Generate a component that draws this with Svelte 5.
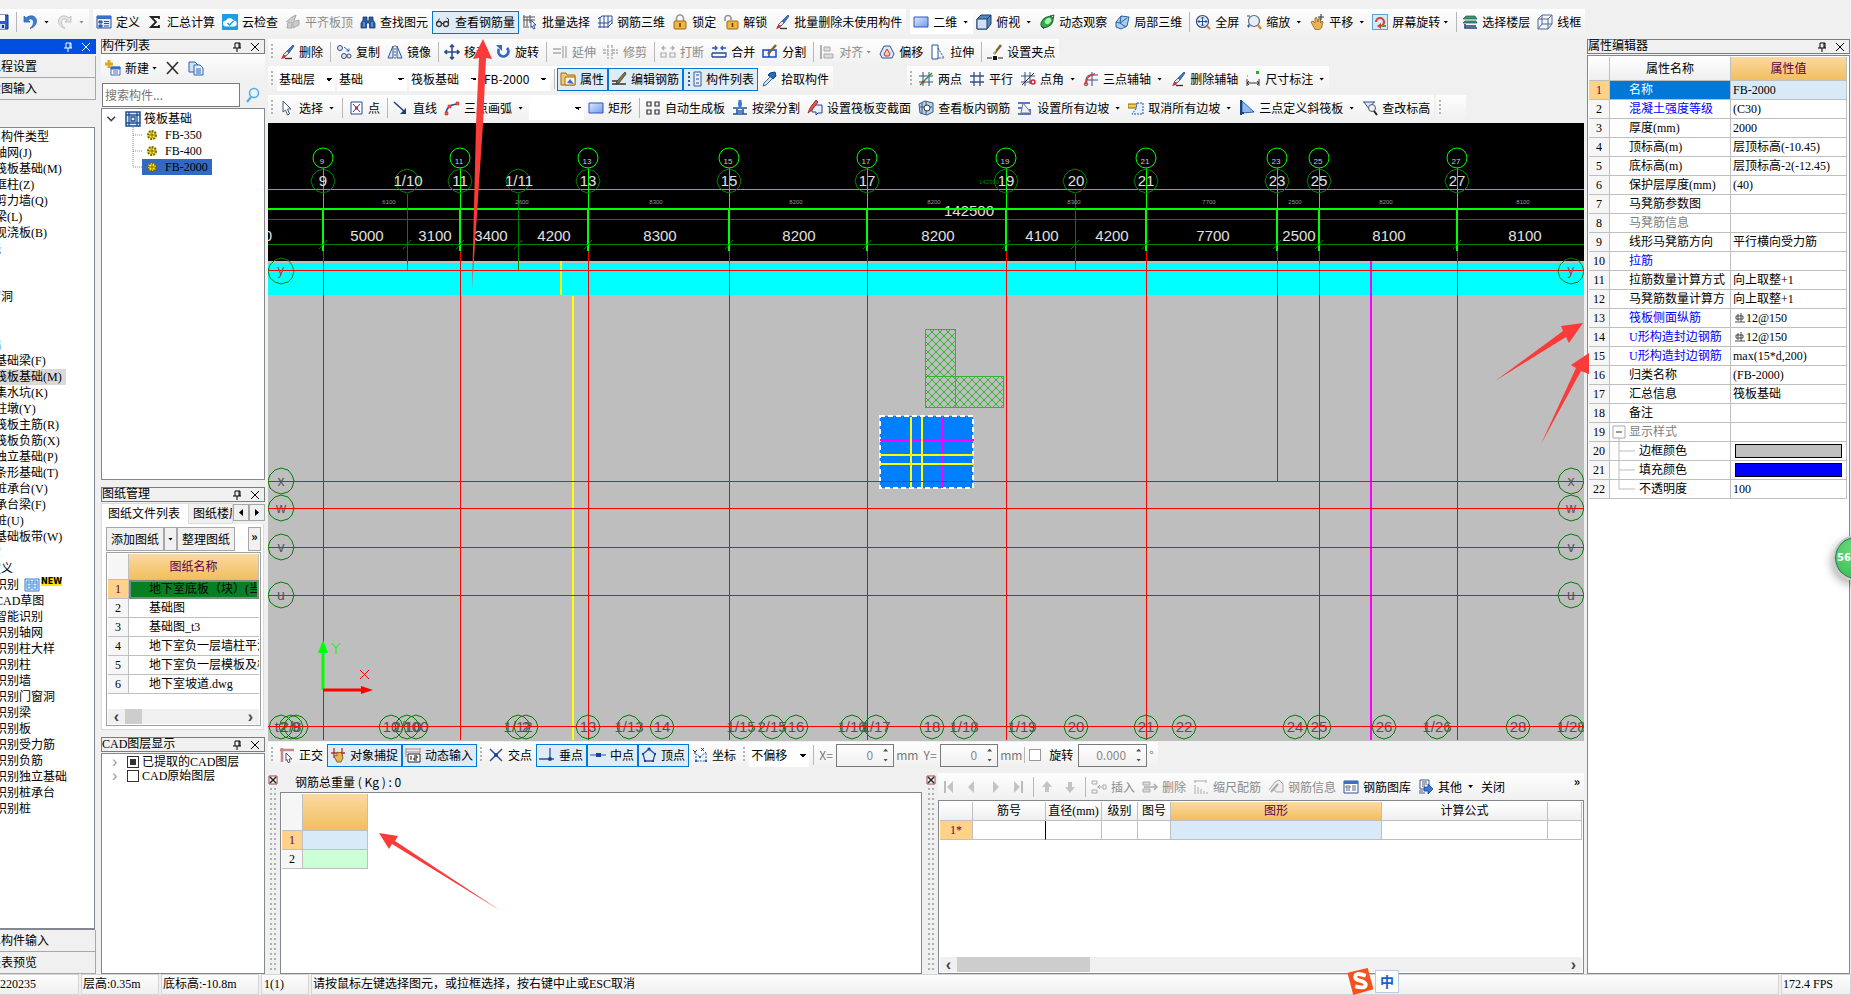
<script lang="ts">
	interface Tool {
		kind?: 'sep' | 'grip' | 'combo';
		icon?: string;
		label?: string;
		caret?: 'far' | 'near';
		on?: boolean;
		off?: boolean;
		white?: boolean;
		width?: number;
		name?: string;
	}

	const sep: Tool = { kind: 'sep' };
	const grip: Tool = { kind: 'grip' };

	// 16x16 glyphs
	const icons: Record<string, string> = {
		save: '<path d="M1 1h14v14H3l-2-2z" fill="#2f5fc4" stroke="#16357e"/><path d="M4 1h8v6H4z" fill="#fff"/><path d="M5 10h7v5H5z" fill="#c9d6ee"/><path d="M9 11h2v3H9z" fill="#16357e"/>',
		undo: '<path d="M2 2v6h6L5.8 6C9 3.500 12 5.500 11.500 9c-.3 2-1.500 4-3.500 5.500 4-1 6.500-4 6.500-7.500C14.500 2 8.500 0 4 4z" fill="#3d7fd6" stroke="#2355a0" stroke-width=".7"/>',
		redo: '<path d="M14 2v6H8l2.200-2C7 3.500 4 5.500 4.500 9c.3 2 1.500 4 3.500 5.500-4-1-6.500-4-6.500-7.500C1.500 2 7.500 0 12 4z" fill="#e6e6e6" stroke="#b8b8b8" stroke-width=".8"/>',
		define: '<path d="M1 2h14v12H1z" fill="#dce9fb" stroke="#2a5298"/><path d="M1 2h14v3H1z" fill="#3a6fc4"/><path d="M3 7h3v2H3zM3 11h3v2H3zM8 7.500h5M8 9.500h5M8 12h5" fill="#3a6fc4" stroke="#2a5298"/>',
		sigma: '<path d="M12 5V3H4l5 5-5 5h8v-2" fill="none" stroke="#222" stroke-width="1.800"/>',
		cloud: '<rect width="16" height="16" rx="1" fill="#1d9de3"/><path d="M4 12.500a3 3 0 0 1 0-6 4 4 0 0 1 7.500 0 3 3 0 0 1 .5 6z" fill="#fff"/><path d="M5.500 9l2 2 4-4" fill="none" stroke="#1d9de3" stroke-width="1.500"/>',
		top: '<path d="M1 8l6-5 4-2-2 6M3 8h4v6H2zM8 8l6-2v5l-6 3z" fill="#ccc" stroke="#aaa"/>',
		find: '<path d="M3 3h4v4h2V3h4v3l2 3v5H9.500V9h-3v5H1V9l2-3z" fill="#2a5ca8" stroke="#17396f" stroke-width=".8"/><path d="M4 8v5M12 8v5" stroke="#8fb6ea"/>',
		glasses: '<circle cx="4" cy="10" r="2.500" fill="none" stroke="#333" stroke-width="1.300"/><circle cx="11" cy="10" r="2.500" fill="none" stroke="#333" stroke-width="1.300"/><path d="M6.500 9.500h2M1.500 9.500l3-5M13.500 9.500V5l-2-1" fill="none" stroke="#333"/>',
		batch: '<path d="M2 1v11M5 3v9M8 1v8M1 3h12M1 6h12M1 13h6" stroke="#555" fill="none"/><path d="M9 6l5 5h-2.500l1.500 3.500-1.500.5-1.500-3-1 1.500z" fill="#fff" stroke="#2a5298"/>',
		rebar3d: '<path d="M1 5l4-3h10M1 9h10l4-3M1 13h10l4-4M3 3v11M7 2v12M11 2v12M15 2v8" fill="none" stroke="#2a5298"/>',
		lock: '<path d="M4.500 7V4.500a3.500 3.500 0 0 1 7 0V7" fill="none" stroke="#999" stroke-width="1.700"/><rect x="2" y="7" width="12" height="8" rx="1" fill="#efb646" stroke="#9b6a12"/><path d="M8 9v4" stroke="#5a3a00" stroke-width="1.500"/>',
		unlock: '<path d="M2 7V4.500a3 3 0 0 1 6 0V6" fill="none" stroke="#999" stroke-width="1.700"/><rect x="4" y="7" width="11" height="8" rx="1" fill="#efb646" stroke="#9b6a12"/><path d="M9.500 9v4" stroke="#5a3a00" stroke-width="1.500"/>',
		brush: '<path d="M14 1L8 7l2 2 5-7z" fill="#3f76c9" stroke="#1f3f7a" stroke-width=".7"/><path d="M8 7l2 2-3 3-3-1z" fill="#d9e4f3" stroke="#667"/><path d="M4 11l3 1-1 2-4 1z" fill="#c33"/><path d="M6 14.500h7" stroke="#333" stroke-width="1.300"/>',
		rect: '<defs><linearGradient id="bx" x2="1" y2="1"><stop stop-color="#dbe8ff"/><stop offset="1" stop-color="#6f9bee"/></linearGradient></defs><path d="M1 3h14v10H1z" fill="url(#bx)" stroke="#3555b5"/>',
		cube: '<path d="M1 5l4-4h10v9l-4 5H1z" fill="#5586bd" stroke="#1f3f6a"/><path d="M1 5h10v10H1z" fill="#cfe0f3" stroke="#1f3f6a"/><path d="M11 5l4-4" stroke="#1f3f6a"/>',
		orbit: '<ellipse cx="8" cy="8" rx="7" ry="4.500" transform="rotate(-40 8 8)" fill="#2fae4b" stroke="#16652a"/><ellipse cx="9" cy="7" rx="3.500" ry="2.500" transform="rotate(-40 9 7)" fill="#a9f0b3"/><path d="M2 12l3 3M11 2l4-1-1 4" stroke="#444" fill="none"/>',
		local3d: '<path d="M2 8l5-6 8 1-2 9-6 3-5-2z" fill="#a9cdee" stroke="#2a6298"/><path d="M7 2l-1 7 6 4M2 8l4 1M6 9l7-5" fill="none" stroke="#2a6298"/>',
		full: '<circle cx="7.500" cy="7.500" r="6" fill="#e6effb" stroke="#3a4a66" stroke-width="1.200"/><path d="M7.500 3v9M3 7.500h9M6 4.500L7.500 3 9 4.500M6 10.500L7.500 12 9 10.500M4.500 6L3 7.500 4.500 9M10.500 6L12 7.500 10.500 9" stroke="#234fa5" fill="none"/><path d="M12 12l3 3" stroke="#d08a22" stroke-width="2.200"/>',
		zoom: '<circle cx="8" cy="7" r="5.500" fill="#e2effb" stroke="#667" stroke-width="1.200"/><path d="M12 11l3 4" stroke="#d08a22" stroke-width="2.200"/><path d="M1 2h3M1 12h3M2.500 10.500v3" stroke="#234fa5"/>',
		pan: '<path d="M2 8l2-1 2 2V4l1.500-.5L9 8l1-4 1.500.5L11.500 9l1.500-2 1 1-1.500 6-2 1.500H6z" fill="#e8b452" stroke="#8a6420" stroke-width=".8"/><path d="M12 0v6M9 3h6" stroke="#333"/>',
		rotview: '<rect x=".5" y=".5" width="15" height="15" fill="#d6e9fb" stroke="#5da0da"/><path d="M4 8a4 4 0 1 1 4 4" fill="none" stroke="#d8432f" stroke-width="2.200"/><path d="M9 9v6l-4-3z" fill="#d8432f"/><path d="M10 12h4" stroke="#3da84a" stroke-width="2"/>',
		floor: '<path d="M1 5l3-3h9l2 3zM1 9l2-2h11l1 2z" fill="#3b9a5b" stroke="#1b4f6a" stroke-width=".7"/><path d="M3 10v4h12M4 12h10" fill="none" stroke="#1f3f7a" stroke-width="1.600"/>',
		wire: '<path d="M1 5l4-4h10v9l-4 5H1zM1 5h10v10M11 5l4-4M5 1v9h10M5 10l-4 5" fill="#eef4fc" fill-opacity=".5" stroke="#50698f"/>',
		copy: '<circle cx="4" cy="4" r="2.500" fill="#dfe8f6" stroke="#334a75"/><circle cx="8" cy="12" r="2.500" fill="#dfe8f6" stroke="#334a75"/><circle cx="13" cy="12" r="2" fill="none" stroke="#334a75"/><path d="M8 3l5 4M10.500 7H13V4.500" fill="none" stroke="#2f62c0"/>',
		mirror: '<path d="M6 2v12H1zM10 2v12h5z" fill="#dfe8f6" stroke="#2a5298"/><path d="M8 1v14" stroke="#555" stroke-dasharray="2 1"/>',
		move: '<path d="M8 1v14M1 8h14M6 3l2-2 2 2M6 13l2 2 2-2M3 6L1 8l2 2M13 6l2 2-2 2" fill="none" stroke="#2a4a8a" stroke-width="1.600"/>',
		rotate: '<path d="M4 5a5 5 0 1 0 8-1" fill="none" stroke="#3566c0" stroke-width="2.800"/><path d="M1 1h6v6z" fill="#3566c0"/>',
		extend: '<path d="M1 5h8M1 9h8M11 2v12M14 2v12" stroke="#aaa" fill="none" stroke-width="1.300"/>',
		trim: '<path d="M5 1v14M9 1v14M0 6h5M0 9h5M9 6h6M9 9h6" stroke="#aaa" stroke-width="1.300" fill="none" stroke-dasharray="3 1"/>',
		cut: '<path d="M1 9h5v4H1zM10 9h5v4h-5zM2 4h4M10 4h4M4 2L2 4l2 2M12 2l2 2-2 2" fill="none" stroke="#aaa" stroke-width="1.200"/>',
		join: '<path d="M1 13h14M1 9h14v4M1 9v4" fill="none" stroke="#2a4a8a" stroke-width="1.300"/><path d="M1 4h5M10 4h5M4 2l2 2-2 2M12 2l-2 2 2 2" fill="none" stroke="#2a5bc4" stroke-width="1.400"/>',
		split: '<path d="M1 6h13v7H1zM7 6v7" fill="none" stroke="#1446e0" stroke-width="1.500"/><path d="M14 1L6 10" stroke="#7c6334" stroke-width="2.400"/>',
		align: '<path d="M2 1v14" stroke="#999" stroke-width="1.500"/><path d="M5 3h6v4H5zM5 10h9v4H5z" fill="#ddd" stroke="#aaa"/>',
		offset: '<path d="M5 2h6l4 8-2 4H3l-2-4z" fill="#dce7f8" stroke="#2a5298"/><path d="M8 5l3 5-1 2H6l-1-2z" fill="#f4c7c7" stroke="#c0392b"/>',
		stretch: '<path d="M2 1h6v14H2z" fill="#fff" stroke="#2a5298"/><path d="M8 4l6 10H8" fill="none" stroke="#2a5298" stroke-dasharray="2 1"/>',
		gripset: '<path d="M0 14h5M11 14h5" stroke="#222"/><path d="M6 12h4v4H6z" fill="#111"/><path d="M14 1L7 10" stroke="#7c6334" stroke-width="2.400"/><path d="M7 10l2-4" stroke="#e8d59a"/>',
		props: '<path d="M1 4V2h5l1 2h8v10H1z" fill="#f4c879" stroke="#a56a13"/><path d="M5 6h10v8H5z" fill="#fff7e2" stroke="#a56a13"/><path d="M7 12l3-4 4 5z" fill="#3a6fc4"/>',
		edit: '<path d="M1 13h14M1 10h6" stroke="#333" stroke-width="1.300"/><path d="M14 1L6 10l-1 3 3-1 7-9z" fill="#8a7a4a" stroke="#333" stroke-width=".8"/>',
		list: '<path d="M2 2h3M2 6h3M2 10h3M2 14h3" stroke="#3a5c9c" stroke-width="2" stroke-dasharray="2 1"/><path d="M8 1h7v14H8z" fill="#e4edfa" stroke="#3a5c9c"/><path d="M10 4h3M10 8h3M10 12h3" stroke="#2a5298"/>',
		pick: '<path d="M9 2l5-1 1 4-3 3-5-4z" fill="#1f6fc4" stroke="#123c70"/><path d="M9 6l-6 6-1 3 3-1 6-6" fill="#cfe4fa" stroke="#3a6a9c"/>',
		twopt: '<path d="M1 5h14M1 11h14M5 1v14M11 1v14" stroke="#33508c"/><path d="M2 14L14 2" stroke="#2d9a36" stroke-width="1.500"/><circle cx="5" cy="11" r="1.500" fill="#c33"/>',
		parallel: '<path d="M1 5h14M1 11h14M5 1v14M11 1v14" stroke="#33508c" stroke-width="1.300"/>',
		angle: '<path d="M1 5h14M1 11h10M5 1v14M10 1v12" stroke="#33508c"/><path d="M2 14L14 2" stroke="#333"/><circle cx="13" cy="11" r="2" fill="none" stroke="#d22" stroke-width="1.500"/>',
		threept: '<path d="M3 14V9q0-5 5-5h7M9 1v14M3 9h12" fill="none" stroke="#33508c"/><path d="M3 13q0-9 9-10" fill="none" stroke="#d33" stroke-width="1.400"/><circle cx="3" cy="13" r="1.800" fill="none" stroke="#d33"/>',
		dim: '<path d="M2 8v7M14 8v7M2 12h12M4 10l-2 2 2 2M12 10l2 2-2 2" fill="none" stroke="#333"/><path d="M11 0h3v3h-3z" fill="#29a53a"/><path d="M2 5h1" stroke="#29a53a"/>',
		cursor: '<path d="M4 1l8 8H8.500l2 5-2 1-2-5L4 12z" fill="#fff" stroke="#46587c"/>',
		point: '<path d="M3 2h11v12H3z" fill="#fff" stroke="#2a4a8a"/><path d="M5 4l7 8M12 4l-7 8" stroke="#2a3fa0"/><path d="M7 6.500h3v3H7z" fill="#d22"/>',
		line: '<path d="M1 2l11 10" stroke="#1f3f7a" stroke-width="1.500"/><path d="M13 8v6H7z" fill="#1f3f7a"/>',
		arc: '<path d="M2 14q0-9 11-10" fill="none" stroke="#2a5298" stroke-width="1.500"/><path d="M1 12h3v3H1zM4 5h3v3H4zM12 2h3v3h-3z" fill="#e55" stroke="#a22" stroke-width=".5"/>',
		auto: '<path d="M2 2h4v4H2zM10 2h4v4h-4zM2 10h4v4H2zM10 10h4v4h-4z" fill="#eef" stroke="#333" stroke-width="1.200"/>',
		beam: '<path d="M1 8h14M1 14h14M5 9v5M11 9v5" stroke="#2a5298" stroke-width="1.600"/><path d="M8 0v7M6 4h4" stroke="#3a78d4" stroke-width="3"/><path d="M6 10h4v4H6z" fill="#4f8ae0"/>',
		section: '<path d="M5 5h10v8h-4l-2 2v-3H5z" fill="#e8eefa" stroke="#2a3fa0"/><path d="M9 0L3 8l-2 5 4-3 6-8z" fill="#e2574a" stroke="#8a1f16" stroke-width=".8"/>',
		inboard: '<path d="M1 4l6-3 8 2v9l-6 3-7-2z" fill="#b8d3ef" stroke="#31587f"/><path d="M4 3v10M8 2v12M2 7h12" stroke="#31587f"/><circle cx="9" cy="8" r="3" fill="#fff" stroke="#333"/>',
		slope: '<path d="M1 3h12M1 8h5M1 14h12V9" fill="none" stroke="#1f4fc0" stroke-width="1.500"/><path d="M6 3l8 10H4z" fill="#e8f0fc" stroke="#777"/>',
		noslope: '<path d="M0 4h9v4H0z" fill="#f0cf4a" stroke="#8a6a12"/><path d="M9 3h6v11H4l4-5z" fill="#e8f0fc" stroke="#1f4fc0" stroke-dasharray="2 1"/>',
		slant: '<path d="M3 1v12l12-1z" fill="#8dbbf0" stroke="#2a62b0"/><path d="M2 0v15M1 13h4" stroke="#1f3f7a" stroke-width="2"/>',
		elev: '<path d="M1 2h12M2 2l5 7 5-7" fill="#dce7f8" stroke="#2a5298"/><circle cx="10" cy="8" r="3.500" fill="#eaf3fd" stroke="#555"/><path d="M12 11l3 4" stroke="#222" stroke-width="2"/>',
		ortho: '<path d="M1 3h14M3 1v14" stroke="#c48a8a" stroke-width="2.500"/><path d="M7 6l6 6h-3l1 3-2 .5-1-3-1 1z" fill="#fff" stroke="#46587c"/>',
		snap: '<path d="M1 6h14M4 1v10M12 1v8" stroke="#a33" stroke-width="1.300"/><path d="M4 9l2-1 1 1V5l2 1 1-1 2 2 1 4-2 4H7z" fill="#e8b452" stroke="#8a6420"/>',
		dyn: '<path d="M1 2h14M1 5h14M1 1v9M15 1v5" stroke="#a88" fill="none"/><path d="M3 7h12v8H3z" fill="#fff" stroke="#222"/><path d="M6 9v4M9 9h3v2H9v2h3" fill="none" stroke="#111"/>',
		cross: '<path d="M2 2l12 12M14 2L2 14" stroke="#2a5298" stroke-width="1.500"/><circle cx="8" cy="8" r="2" fill="#1f3f9a"/>',
		perp: '<path d="M0 12h15M11 1v11" stroke="#2a5298" stroke-width="1.300"/><circle cx="11" cy="12" r="2" fill="#1f3f9a"/>',
		mid: '<path d="M0 8h16" stroke="#2a5298"/><path d="M6 6h5v4H6z" fill="#1f3f9a"/>',
		vertex: '<path d="M8 2l6 5-2 7H4L2 7z" fill="none" stroke="#2a5298" stroke-width="1.300"/><circle cx="8" cy="2" r="1.600" fill="#1f3f9a"/><path d="M1 6h2v2H1zM13 6h2v2h-2zM3 13h2v2H3zM11 13h2v2h-2z" fill="#1f3f9a"/>',
		coord: '<path d="M4 14V7l4 3 6-5v9z" fill="none" stroke="#2a62c0" stroke-dasharray="2 1"/><path d="M1 3l2 2 2-2M3 5v2M9 1l3 3M12 1L9 4" fill="none" stroke="#333"/><path d="M3 13h2v2H3zM13 13h2v2h-2zM7 9h2v2H7z" fill="#2a62c0"/>',
		first: '<path d="M4 2v12" stroke="#bbb" stroke-width="2"/><path d="M12 2v12L6 8z" fill="#c4c4c4"/>',
		prev: '<path d="M10 2v12L4 8z" fill="#c4c4c4"/>',
		next: '<path d="M6 2v12l6-6z" fill="#c4c4c4"/>',
		last: '<path d="M12 2v12" stroke="#bbb" stroke-width="2"/><path d="M4 2v12l6-6z" fill="#c4c4c4"/>',
		up: '<path d="M8 2l5 6h-3v5H6V8H3z" fill="#c4c4c4"/>',
		down: '<path d="M8 14l5-6h-3V3H6v5H3z" fill="#c4c4c4"/>',
		insert: '<path d="M1 2h5v3H1zM1 11h5v3H1zM6 8h5M9 6L7 8l2 2M12 6h3v4h-3z" fill="none" stroke="#aaa"/>',
		remove: '<path d="M1 3h7v3H1zM1 10h7v3H1z" fill="#ddd" stroke="#aaa"/><path d="M2 8h13M12 5l3 3-3 3" fill="none" stroke="#aaa" stroke-width="1.300"/>',
		scale: '<path d="M2 1v3M13 1v3M2 2h11M2 6v9M5 8v7M8 10v5M11 12v3M14 13v2" stroke="#aaa"/>',
		info: '<path d="M1 11L7 3l4-2 4 4v8H8l-2-3" fill="#eee" stroke="#aaa"/><path d="M3 13l7-8" stroke="#aaa" stroke-width="2"/>',
		lib: '<path d="M1 2h14v12H1z" fill="#fff" stroke="#2a5298"/><path d="M1 2h14v3H1z" fill="#3a6fc4"/><path d="M3 7h4v2H3zM9 7h4M3 11h4M9 11h4M9 9h4" stroke="#667" fill="none"/>',
		other: '<path d="M2 1h9v9H2z" fill="#fff" stroke="#46587c"/><path d="M4 3h5M4 5h5M4 7h3M1 12h4M1 14h6" stroke="#46587c"/><path d="M6 8h4V5l5 5-5 5v-3H6z" fill="#3a78e0" stroke="#1f3f9a" stroke-width=".8"/>'
	};

	const quickTools: Tool[] = [
		{ icon: 'save', name: '保存' }, sep,
		{ icon: 'undo', name: '撤销', caret: 'far' },
		{ icon: 'redo', name: '恢复', caret: 'far', off: true }
	];

	const mainTools: Tool[] = [
		{ icon: 'define', label: '定义' },
		{ icon: 'sigma', label: '汇总计算' },
		{ icon: 'cloud', label: '云检查' },
		{ icon: 'top', label: '平齐板顶', off: true },
		{ icon: 'find', label: '查找图元' },
		{ icon: 'glasses', label: '查看钢筋量', on: true },
		{ icon: 'batch', label: '批量选择' },
		{ icon: 'rebar3d', label: '钢筋三维' },
		{ icon: 'lock', label: '锁定' },
		{ icon: 'unlock', label: '解锁' },
		{ icon: 'brush', label: '批量删除未使用构件' }
	];

	const viewTools: Tool[] = [
		{ icon: 'rect', label: '二维', caret: 'far', white: true },
		{ icon: 'cube', label: '俯视', caret: 'far' },
		{ icon: 'orbit', label: '动态观察' },
		{ icon: 'local3d', label: '局部三维' }, sep,
		{ icon: 'full', label: '全屏' },
		{ icon: 'zoom', label: '缩放', caret: 'far' },
		{ icon: 'pan', label: '平移', caret: 'far' },
		{ icon: 'rotview', label: '屏幕旋转', caret: 'near' }, sep,
		{ icon: 'floor', label: '选择楼层' },
		{ icon: 'wire', label: '线框' }
	];

	const editTools: Tool[] = [
		grip,
		{ icon: 'brush', label: '删除' }, sep,
		{ icon: 'copy', label: '复制' },
		{ icon: 'mirror', label: '镜像' }, sep,
		{ icon: 'move', label: '移动' },
		{ icon: 'rotate', label: '旋转' }, sep,
		{ icon: 'extend', label: '延伸', off: true },
		{ icon: 'trim', label: '修剪', off: true }, sep,
		{ icon: 'cut', label: '打断', off: true },
		{ icon: 'join', label: '合并' },
		{ icon: 'split', label: '分割' }, sep,
		{ icon: 'align', label: '对齐', off: true, caret: 'near' },
		{ icon: 'offset', label: '偏移' },
		{ icon: 'stretch', label: '拉伸' }, sep,
		{ icon: 'gripset', label: '设置夹点' }
	];

	const memberTools: Tool[] = [
		grip,
		{ kind: 'combo', label: '基础层', width: 58, name: '楼层' },
		{ kind: 'combo', label: '基础', width: 70, name: '构件大类' },
		{ kind: 'combo', label: '筏板基础', width: 71, name: '构件小类' },
		{ kind: 'combo', label: 'FB-2000', width: 68, name: '构件' }, sep,
		{ icon: 'props', label: '属性', on: true },
		{ icon: 'edit', label: '编辑钢筋', on: true },
		{ icon: 'list', label: '构件列表', on: true },
		{ icon: 'pick', label: '拾取构件' }
	];

	const axisTools: Tool[] = [
		grip,
		{ icon: 'twopt', label: '两点' },
		{ icon: 'parallel', label: '平行' },
		{ icon: 'angle', label: '点角', caret: 'far' },
		{ icon: 'threept', label: '三点辅轴', caret: 'far' },
		{ icon: 'brush', label: '删除辅轴' },
		{ icon: 'dim', label: '尺寸标注', caret: 'far' }
	];

	const drawTools: Tool[] = [
		grip,
		{ icon: 'cursor', label: '选择', caret: 'far' }, sep,
		{ icon: 'point', label: '点' }, sep,
		{ icon: 'line', label: '直线' },
		{ icon: 'arc', label: '三点画弧', caret: 'far' },
		{ kind: 'combo', label: '', width: 55, name: '画弧方式' },
		{ icon: 'rect', label: '矩形' }, sep,
		{ icon: 'auto', label: '自动生成板' },
		{ icon: 'beam', label: '按梁分割' },
		{ icon: 'section', label: '设置筏板变截面' },
		{ icon: 'inboard', label: '查看板内钢筋' },
		{ icon: 'slope', label: '设置所有边坡', caret: 'far' },
		{ icon: 'noslope', label: '取消所有边坡', caret: 'far' },
		{ icon: 'slant', label: '三点定义斜筏板', caret: 'far' },
		{ icon: 'elev', label: '查改标高' }
	];

	const snapTools: Tool[] = [
		grip,
		{ icon: 'ortho', label: '正交' },
		{ icon: 'snap', label: '对象捕捉', on: true },
		{ icon: 'dyn', label: '动态输入', on: true }, grip,
		{ icon: 'cross', label: '交点' },
		{ icon: 'perp', label: '垂点', on: true },
		{ icon: 'mid', label: '中点', on: true },
		{ icon: 'vertex', label: '顶点', on: true },
		{ icon: 'coord', label: '坐标' }, grip,
		{ kind: 'combo', label: '不偏移', width: 60, name: '偏移方式' }, sep
	];

	const rebarNav: Tool[] = [
		{ icon: 'first', name: '首行', off: true },
		{ icon: 'prev', name: '上一行', off: true },
		{ icon: 'next', name: '下一行', off: true },
		{ icon: 'last', name: '末行', off: true }, sep,
		{ icon: 'up', name: '上移', off: true },
		{ icon: 'down', name: '下移', off: true }, sep
	];

	const rebarTools: Tool[] = [
		{ icon: 'insert', label: '插入', off: true },
		{ icon: 'remove', label: '删除', off: true },
		{ icon: 'scale', label: '缩尺配筋', off: true },
		{ icon: 'info', label: '钢筋信息', off: true },
		{ icon: 'lib', label: '钢筋图库' },
		{ icon: 'other', label: '其他', caret: 'far' },
		{ label: '关闭' }
	];

	const navGroups = [
		{ name: '常用构件类型', items: ['轴网(J)', '筏板基础(M)', '框柱(Z)', '剪力墙(Q)', '梁(L)', '现浇板(B)'] },
		{ name: '轴线', items: [] },
		{ name: '柱', items: [] },
		{ name: '墙', items: [] },
		{ name: '门窗洞', items: [] },
		{ name: '梁', items: [] },
		{ name: '板', items: [] },
		{
			name: '基础',
			items: ['基础梁(F)', '筏板基础(M)', '集水坑(K)', '柱墩(Y)', '筏板主筋(R)', '筏板负筋(X)', '独立基础(P)', '条形基础(T)', '桩承台(V)', '承台梁(F)', '桩(U)', '基础板带(W)']
		},
		{ name: '其它', items: [] },
		{ name: '自定义', items: [] },
		{
			name: '识别',
			prefix: 'CAD',
			items: ['CAD草图', '智能识别', '识别轴网', '识别柱大样', '识别柱', '识别墙', '识别门窗洞', '识别梁', '识别板', '识别受力筋', '识别负筋', '识别独立基础', '识别桩承台', '识别桩']
		}
	];

	const drawings = ['地下室底板（块）(当前)', '基础图', '基础图_t3', '地下室负一层墙柱平法', '地下室负一层模板及板', '地下室坡道.dwg'];

	interface Prop {
		name: string;
		value?: string;
		tone?: string;
		bar?: boolean;
		swatch?: string;
		tree?: 'root' | 'mid' | 'end';
	}

	const props: Prop[] = [
		{ name: '名称', value: 'FB-2000', tone: 'picked' },
		{ name: '混凝土强度等级', value: '(C30)', tone: 'key' },
		{ name: '厚度(mm)', value: '2000' },
		{ name: '顶标高(m)', value: '层顶标高(-10.45)' },
		{ name: '底标高(m)', value: '层顶标高-2(-12.45)' },
		{ name: '保护层厚度(mm)', value: '(40)' },
		{ name: '马凳筋参数图' },
		{ name: '马凳筋信息', tone: 'dim' },
		{ name: '线形马凳筋方向', value: '平行横向受力筋' },
		{ name: '拉筋', tone: 'key' },
		{ name: '拉筋数量计算方式', value: '向上取整+1' },
		{ name: '马凳筋数量计算方', value: '向上取整+1' },
		{ name: '筏板侧面纵筋', value: '12@150', tone: 'key', bar: true },
		{ name: 'U形构造封边钢筋', value: '12@150', tone: 'key', bar: true },
		{ name: 'U形构造封边钢筋', value: 'max(15*d,200)', tone: 'key' },
		{ name: '归类名称', value: '(FB-2000)' },
		{ name: '汇总信息', value: '筏板基础' },
		{ name: '备注' },
		{ name: '显示样式', tone: 'dim', tree: 'root' },
		{ name: '边框颜色', swatch: '#c0c0c0', tree: 'mid' },
		{ name: '填充颜色', swatch: '#0000ff', tree: 'mid' },
		{ name: '不透明度', value: '100', tree: 'end' }
	];

	// drawing area, in window coordinates
	const axes = [
		{ x: 323, n: '9' }, { x: 460, n: '11' }, { x: 588, n: '13' }, { x: 729, n: '15' }, { x: 867, n: '17' },
		{ x: 1006, n: '19' }, { x: 1146, n: '21' }, { x: 1277, n: '23', end: 481 }, { x: 1319, n: '25' }, { x: 1457, n: '27' }
	];
	const subAxes = [{ x: 407, n: '1/10' }, { x: 518, n: '1/11' }, { x: 1075, n: '20' }];
	const rowsY = [
		{ y: 481, n: 'x' }, { y: 508, n: 'w' }, { y: 547, n: 'v' }, { y: 595, n: 'u' }
	];
	const spans: [number, string][] = [
		[268, '0'], [367, '5000'], [435, '3100'], [491, '3400'], [554, '4200'], [660, '8300'], [799, '8200'], [938, '8200'],
		[1042, '4100'], [1112, '4200'], [1213, '7700'], [1299, '2500'], [1389, '8100'], [1525, '8100']
	];
	const tinySpans: [number, string][] = [
		[389, '6100'], [522, '2600'], [656, '8300'], [796, '8200'], [934, '8200'], [1074, '8300'], [1209, '7700'],
		[1295, '2500'], [1386, '8200'], [1523, '8100']
	];
	const feet: [number, string][] = [
		[281, 't2'], [291, '2/8'], [296, '9'], [391, '10'], [407, '2/10'], [416, '100'], [518, '1/12'], [526, '2'], [588, '13'],
		[629, '1/13'], [662, '14'], [741, '1/15'], [772, '2/15'], [796, '16'], [852, '1/16'], [876, '1/17'], [932, '18'],
		[964, '1/18'], [1022, '1/19'], [1076, '20'], [1146, '21'], [1184, '22'], [1295, '24'], [1319, '25'], [1384, '26'],
		[1437, '1/26'], [1518, '28'], [1571, '1/28']
	];

	// plotted circles are twelve-sided
	function ring(cx: number, cy: number, r: number): string {
		return Array.from({ length: 12 }, (_, i) => {
			const a = (i * Math.PI) / 6;
			return `${Math.round(cx + r * Math.cos(a))},${Math.round(cy + r * Math.sin(a))}`;
		}).join(' ');
	}

	let search = $state('');
	let offsetX = $state('0');
	let offsetY = $state('0');
	let angle = $state('0.000');
</script>

{#snippet glyph(name: string)}
	<svg class="icon" viewBox="0 0 16 16" aria-hidden="true">{@html icons[name]}</svg>
{/snippet}

{#snippet tools(list: Tool[])}
	{#each list as tool}
		{#if tool.kind === 'sep'}
			<span class="sep"></span>
		{:else if tool.kind === 'grip'}
			<span class="grip"></span>
		{:else if tool.kind === 'combo'}
			<select class="combo" aria-label={tool.name} style={`width:${tool.width}px`}>
				<option>{tool.label}</option>
			</select>
		{:else}
			<button class="tool" class:on={tool.on} class:off={tool.off} class:white={tool.white} aria-label={tool.label ?? tool.name}>
				{#if tool.icon}{@render glyph(tool.icon)}{/if}
				{#if tool.label}<span>{tool.label}</span>{/if}
				{#if tool.caret}<i class={`caret ${tool.caret}`}></i>{/if}
			</button>
		{/if}
	{/each}
{/snippet}

{#snippet title(text: string, active = false)}
	<header class="title" class:active>
		<h2>{text}</h2>
		<button aria-label="自动隐藏"><svg viewBox="0 0 10 10"><path d="M3 1h5v5M3 1v5M7 1v5M1 6h8M5 6v4" /></svg></button>
		<button aria-label="关闭面板"><svg viewBox="0 0 10 10"><path d="M1 1l8 8M9 1L1 9" /></svg></button>
	</header>
{/snippet}

{#snippet arrows()}
	<span class="arrows"><i class="tri up"></i><i class="tri"></i></span>
{/snippet}

{#snippet handle(name: string)}
	<div class="handle">
		<button aria-label={name}><svg viewBox="0 0 10 10"><path d="M1 1h8v8H1z" fill="#fff" stroke="#944" /><path d="M2 2l6 6M8 2L2 8" stroke="#222" stroke-width="1.500" /></svg></button>
		<i></i>
	</div>
{/snippet}

<div class="app">
	<div class="topbar">
		<div class="group quick">{@render tools(quickTools)}</div>
		<div class="group">{@render tools(mainTools)}</div>
		<div class="group">{@render tools(viewTools)}</div>
	</div>

	<div class="main">
		<aside class="nav">
			{@render title('', true)}
			<button class="page first">工程设置</button>
			<button class="page">绘图输入</button>
			<div class="nav-gap"></div>
			<div class="nav-tree">
				<ul>
					{#each navGroups as group}
						<li>
							{#if group.prefix}<small>{group.prefix}</small>{/if}{group.name}
							{#if group.prefix}
								<svg class="book" viewBox="0 0 16 14"><path d="M1 1h14v12H1z" fill="#e4f1fd" stroke="#3b7ac0" /><path d="M3 3h4v8H3zM9 3h4v8H9zM3 5h4M3 8h4M9 5h4M9 8h4" fill="none" stroke="#3b8ad8" /></svg>
								<b class="new">NEW</b>
							{/if}
						</li>
						{#each group.items as item, i}
							<li class="leaf"><span class:current={group.name === '基础' && i === 1}>{item}</span></li>
						{/each}
					{/each}
				</ul>
			</div>
			<button class="page">单构件输入</button>
			<button class="page">报表预览</button>
		</aside>

		<aside class="side">
			{@render title('构件列表')}
			<div class="side-tools">
				<button class="tool"><svg class="icon" viewBox="0 0 16 16"><path d="M4 0v8M0 4h8" stroke="#e0a91c" stroke-width="3" /><path d="M6 7h9v8H6z" fill="#fff" stroke="#3a6fc4" /><path d="M6 7h9v2H6zM8 11h5M8 13h5" fill="#3a6fc4" stroke="#3a6fc4" /></svg><span>新建</span><i class="caret near"></i></button>
				<button class="tool" aria-label="删除构件"><svg class="icon" viewBox="0 0 16 16"><path d="M2 2l11 12M13 2L2 14" stroke="#333" stroke-width="1.700" /></svg></button>
				<button class="tool" aria-label="复制构件"><svg class="icon" viewBox="0 0 16 16"><path d="M1 2h6l3 3v7H1z" fill="#cfe2f8" stroke="#2a62b0" /><path d="M6 5h6l3 3v7H6z" fill="#e8f2fd" stroke="#2a62b0" /><path d="M8 9h5M8 11h5M8 13h5" stroke="#2a62b0" /></svg></button>
			</div>
			<div class="search">
				<input type="text" placeholder="搜索构件..." aria-label="搜索构件" bind:value={search} />
				<button aria-label="搜索"><svg class="icon" viewBox="0 0 16 16"><circle cx="9" cy="6" r="4.500" fill="#e8f5ff" stroke="#5aace4" stroke-width="1.600" /><path d="M6 10l-4 5" stroke="#5aace4" stroke-width="2.200" /></svg></button>
			</div>
			<div class="box members">
				<div class="branch">
					<svg class="fold" viewBox="0 0 26 16"><path d="M7 5l5 5 5-5" fill="none" stroke="#444" stroke-width="2" /></svg>
					<svg class="icon" viewBox="0 0 16 16"><path d="M1 1h14v14H1z" fill="#dce9f8" stroke="#1f4f90" stroke-width="1.500" /><path d="M4 1v14M12 1v14M1 4h14M1 12h14M6 6h4v4H6z" fill="none" stroke="#1f4f90" stroke-width="1.300" /></svg>
					<span>筏板基础</span>
				</div>
				{#each ['FB-350', 'FB-400', 'FB-2000'] as member}
					<div class="member">
						<svg class="twig" viewBox="0 0 10 16"><path d={member === 'FB-2000' ? 'M1 0v8h9' : 'M1 0v16M1 8h9'} fill="none" stroke="#888" stroke-dasharray="1 1" /></svg>
						<span class="leafname" class:current={member === 'FB-2000'}>
							<svg viewBox="0 0 12 12"><circle cx="6" cy="6" r="4" fill="#ffe92e" stroke="#7a6a00" stroke-dasharray="2 1" stroke-width="2" /><path d="M6 3v6M3 6h6" stroke="#7a6a00" /></svg>
							{member}
						</span>
					</div>
				{/each}
			</div>

			<div class="gap"></div>
			{@render title('图纸管理')}
			<div class="sheets">
				<div class="tabs">
					<button class="tab active">图纸文件列表</button>
					<button class="tab">图纸楼层对照表</button>
					<button class="step" aria-label="左移"><i class="tri left"></i></button>
					<button class="step" aria-label="右移"><i class="tri right"></i></button>
				</div>
				<div class="sheet-body">
					<div class="sheet-tools">
						<button class="raised">添加图纸</button>
						<button class="raised drop" aria-label="更多添加方式"><i class="caret"></i></button>
						<button class="raised">整理图纸</button>
						<button class="raised more">»</button>
					</div>
					<div class="sheet-grid">
						<table class="grid">
							<thead><tr><th class="idx"></th><th class="hot">图纸名称</th></tr></thead>
							<tbody>
								{#each drawings as drawing, i}
									<tr class:current={i === 0}><td class="idx">{i + 1}</td><td>{drawing}</td></tr>
								{/each}
							</tbody>
						</table>
						<div class="scroll"><i>‹</i><span class="thumb short"></span><i>›</i></div>
					</div>
				</div>
			</div>

			<div class="gap"></div>
			{@render title('CAD图层显示')}
			<div class="box layers">
				<div class="layer"><i>›</i><label><input type="checkbox" indeterminate={true} />已提取的CAD图层</label></div>
				<div class="layer"><i>›</i><label><input type="checkbox" />CAD原始图层</label></div>
			</div>
		</aside>

		<main class="work">
			<div class="bar edit"><div class="group">{@render tools(editTools)}</div></div>
			<div class="bar member-bar">
				<div class="group">{@render tools(memberTools)}</div>
				<div class="group axis">{@render tools(axisTools)}</div>
			</div>
			<div class="bar draw">
				<div class="group">{@render tools(drawTools)}</div>
				<div class="group spare"><span class="grip"></span></div>
			</div>

			<div class="canvas">
				<svg width="100%" height="100%">
					<defs>
						<pattern id="hatch" width="8" height="8" patternUnits="userSpaceOnUse">
							<path d="M0 0l8 8M8 0L0 8" stroke="#33b533" fill="none" />
						</pattern>
					</defs>
					<rect width="100%" height="138" fill="#000" />
					<rect y="140" width="100%" height="32" fill="#0ff" />
					<g transform="translate(-268 -123)">
						<g class="crisp">
							<path class="bright" d="M268 189H2400" />
							<path class="bright thick" d="M268 209H2400" />
							<path class="dark" d="M268 219H2400M268 244H2400" />
							<path class="yellow" d="M561 261V295M573 296V740" />
							<path class="pink" d="M1371 261V740" />
							{#each axes as axis}
								<path class="bright" d={`M${axis.x} 168V208`} />
								<path class="bright thick" d={`M${axis.x} 208V251`} />
								<path class="red" d={`M${axis.x} 251V${axis.end ?? 740}`} />
							{/each}
							{#each subAxes as axis}
								<path class="dark" d={`M${axis.x} 194V270`} />
							{/each}
							<path class="red" d="M268 270H2400" />
						</g>

						{#each axes as axis}
							<circle class="bright" cx={axis.x} cy="158" r="10" />
							<text class="mini" x={axis.x - 1} y="164">{axis.n}</text>
							<polygon class="dark" points={ring(axis.x, 181, 12)} />
							<text class="lead" x={axis.x} y="186">{axis.n}</text>
							<path class="dark" d={`M${axis.x - 4} 249l8-9`} />
						{/each}
						{#each subAxes as axis}
							<polygon class="dark" points={ring(axis.x, 181, 12)} />
							<text class="lead" x={axis.x + 1} y="186">{axis.n}</text>
							<path class="dark" d={`M${axis.x - 4} 249l8-9`} />
						{/each}
						{#each spans as [x, label]}
							<text class="lead" {x} y="241">{label}</text>
						{/each}
						{#each tinySpans as [x, label]}
							<text class="tiny" {x} y="204">{label}</text>
						{/each}
						<text class="lead" x="969" y="216">142500</text>
						<text class="tiny green" x="989" y="184">142300</text>
						<path class="bright thick crisp" d="M930 209H1006" />

						<g class="crisp slab">
							<rect x="925" y="329" width="30" height="78" fill="url(#hatch)" stroke="#33b533" />
							<rect x="925" y="376" width="78" height="31" fill="url(#hatch)" stroke="#33b533" />
							<rect x="880" y="416" width="93" height="72" fill="#0080ff" stroke="#fff" stroke-width="2" stroke-dasharray="5 3" />
							<path class="pink" d="M880 440H974M942 417V488" />
							<path class="yellow" d="M911 417V488M922 417V488M880 455H973M880 464H973" />
						</g>

						{#each rowsY as row}
							<polygon class="dark" points={ring(281, row.y, 13)} />
							<polygon class="dark" points={ring(1571, row.y, 13)} />
							<text class="foot row" x="281" y={row.y + 5}>{row.n}</text>
							<text class="foot row" x="1571" y={row.y + 5}>{row.n}</text>
							<path class="red crisp" d={`M268 ${row.y}H2400`} />
						{/each}
						<polygon class="dark" points={ring(281, 271, 13)} />
						<polygon class="dark" points={ring(1571, 271, 13)} />
						<text class="foot row warm" x="281" y="275">y</text>
						<text class="foot row warm" x="1571" y="275">y</text>
						{#each feet as [x, label]}
							<polygon class="dark" points={ring(x, 727, 12)} />
							<text class="foot" {x} y="732">{label}</text>
						{/each}
						<path class="red crisp" d="M268 726H2400" />

						<path d="M323 690V646" stroke="#0f0" stroke-width="3" />
						<path d="M323 640l-5 13h10z" fill="#0f0" />
						<path d="M323 690H364" stroke="#f00" stroke-width="3" />
						<path d="M373 690l-12-4v8z" fill="#f00" />
						<path d="M332 643l4 5 4-5M336 648v6" stroke="#0f0" fill="none" />
						<path d="M360 670l9 9M369 670l-9 9" stroke="#f00" fill="none" />
					</g>
				</svg>
			</div>

			<div class="bar snap">
				<div class="group">
					{@render tools(snapTools)}
					<label class="unit" for="off-x">X=</label>
					<span class="spin"><input id="off-x" type="text" bind:value={offsetX} />{@render arrows()}</span>
					<span class="unit mm">mm</span>
					<label class="unit" for="off-y">Y=</label>
					<span class="spin"><input id="off-y" type="text" bind:value={offsetY} />{@render arrows()}</span>
					<span class="unit mm">mm</span>
					<label class="turn"><input type="checkbox" />旋转</label>
					<span class="spin wide"><input type="text" aria-label="旋转角度" bind:value={angle} />{@render arrows()}</span>
					<span class="degree">°</span>
				</div>
			</div>

			<div class="lower">
				{@render handle('关闭钢筋总量')}
				<section class="weight">
					<h3>钢筋总重量 ( Kg ) : 0</h3>
					<div class="box">
						<table class="grid total">
							<thead><tr><th class="idx"></th><th class="hot"></th></tr></thead>
							<tbody>
								<tr class="current"><td class="idx">1</td><td class="sky"></td></tr>
								<tr><td class="idx">2</td><td class="mint"></td></tr>
							</tbody>
						</table>
					</div>
				</section>
				{@render handle('关闭钢筋编辑')}
				<section class="rebar">
					<div class="group rebar-tools">
						{@render tools(rebarNav)}
						{@render tools(rebarTools)}
						<button class="overflow">»</button>
					</div>
					<div class="box">
						<table class="grid bars">
							<colgroup><col class="c1" /><col class="c2" /><col class="c3" /><col class="c4" /><col class="c5" /><col class="c6" /><col class="c7" /><col /></colgroup>
							<thead><tr><th></th><th>筋号</th><th>直径(mm)</th><th>级别</th><th>图号</th><th class="hot">图形</th><th>计算公式</th><th></th></tr></thead>
							<tbody><tr class="current"><td class="idx">1*</td><td class="edge"></td><td></td><td></td><td></td><td class="sky"></td><td></td><td></td></tr></tbody>
						</table>
						<div class="scroll"><i>‹</i><span class="thumb"></span><i>›</i></div>
					</div>
				</section>
			</div>
		</main>

		<aside class="inspector">
			{@render title('属性编辑器')}
			<div class="box">
				<table class="grid">
					<colgroup><col class="p1" /><col class="p2" /><col /></colgroup>
					<thead><tr><th></th><th>属性名称</th><th class="hot">属性值</th></tr></thead>
					<tbody>
						{#each props as prop, i}
							<tr class:current={i === 0}>
								<td class="idx">{i + 1}</td>
								<td class={`name ${prop.tone ?? ''}`}>
									{#if prop.tree}
										<span class="node">
											<svg class={prop.tree} viewBox={prop.tree === 'root' ? '0 0 18 18' : '0 0 28 18'}>
												{#if prop.tree === 'root'}
													<path d="M2 3h12v12H2z" fill="#fff" stroke="#aaa" /><path d="M5 9h6" stroke="#333" /><path d="M8 15v3" stroke="#bbb" />
												{:else}
													<path d={prop.tree === 'mid' ? 'M8 0v18M8 9h16' : 'M8 0v9h16'} fill="none" stroke="#bbb" />
												{/if}
											</svg>{prop.name}
										</span>
									{:else}
										{prop.name}
									{/if}
								</td>
								<td class:sky={i === 0}>
									{#if prop.swatch}
										<span class="swatch" style={`background:${prop.swatch}`}></span>
									{:else}
										{#if prop.bar}<svg class="steel" viewBox="0 0 10 10"><path d="M3 1v7M6 0v9M1 3h7v3H1zM0 9h10" fill="none" stroke="#222" stroke-width=".8" /></svg>{/if}{prop.value ?? ''}
									{/if}
								</td>
							</tr>
						{/each}
					</tbody>
				</table>
			</div>
		</aside>
	</div>

	<footer class="status">
		<span class="s1">220235</span>
		<span class="s2">层高:0.35m</span>
		<span class="s3">底标高:-10.8m</span>
		<span class="s4">1(1)</span>
		<span class="s5">请按鼠标左键选择图元，或拉框选择，按右键中止或ESC取消</span>
		<span class="s6">172.4 FPS</span>
	</footer>

	<svg class="marks" aria-hidden="true">
		<path d="M483 39l9 20-6-1-3 66-11 165 4-165 3-66-6 1z" />
		<path d="M379 833l19 3-3 5 106 70-109-67-3 5z" />
		<path d="M1583 323l-22 3 2 5-68 50 71-44 3 6z" />
		<path d="M1589 353l-18 12 5 3-35 76 40-73 8 3z" />
	</svg>

	<div class="ime">
		<svg viewBox="0 0 30 28"><path d="M2 5L23 0l6 22-21 6z" fill="#f4511e" /><path d="M21 8q-10-4-11 1 0 3 5 4t6 4q0 5-11 2" fill="none" stroke="#fff" stroke-width="4" /></svg>
		<span>中</span>
	</div>
	<div class="ball">56</div>
</div>

<style>
	:global(body) {
		margin: 0;
		background: #f0f0f0;
	}

	.app {
		position: relative;
		display: flex;
		flex-direction: column;
		min-height: 100vh;
		overflow: hidden;
		box-sizing: border-box;
		padding-top: 8px;
		background: #f0f0f0;
		color: #000;
		font: 12px/16px 'Liberation Serif', 'Noto Sans CJK SC', sans-serif;
	}

	.app *,
	.app *::before {
		box-sizing: border-box;
	}

	button,
	input,
	select {
		margin: 0;
		padding: 0;
		border: 0;
		border-radius: 0;
		background: none;
		color: inherit;
		font: inherit;
	}

	h2,
	h3 {
		margin: 0;
		font: inherit;
	}

	/* toolbars */
	.topbar,
	.bar {
		display: flex;
		align-items: center;
		font-family: 'Noto Sans CJK SC', sans-serif;
	}

	.topbar {
		height: 28px;
		margin-bottom: 3px;
		gap: 4px;
	}

	.group {
		display: flex;
		align-items: center;
		height: 26px;
		flex: none;
		background: linear-gradient(#fefefe, #f0f0f0);
	}

	.quick {
		margin-left: -10px;
	}

	.tool {
		display: flex;
		align-items: center;
		flex: none;
		gap: 4px;
		height: 23px;
		padding: 0 4px 0 3px;
		white-space: nowrap;
	}

	.tool.on {
		background: #dfecf6;
		box-shadow: inset 0 0 0 1px #0078d7;
	}

	.tool.off {
		color: #8c8c8c;
	}

	.tool.white {
		background: #fff;
	}

	.icon {
		flex: none;
		width: 16px;
		height: 16px;
	}

	.caret {
		width: 5px;
		height: 3px;
		background: currentColor;
		clip-path: polygon(0 0, 100% 0, 50% 100%);
	}

	.caret.far {
		margin: 0 1px 0 2px;
	}

	.caret.near {
		margin: 0 1px 0 -1px;
	}

	.sep {
		flex: none;
		width: 1px;
		height: 20px;
		margin: 0 2px 0 3px;
		background: #b8b8b8;
	}

	.grip {
		flex: none;
		width: 2px;
		height: 16px;
		margin: 0 3px;
		background: repeating-linear-gradient(#b4b4b4 0 2px, transparent 2px 4px);
	}

	.combo {
		appearance: none;
		flex: none;
		height: 23px;
		margin: 0 1px;
		padding: 0 0 0 2px;
		background:
			linear-gradient(45deg, transparent 50%, #000 50%) right 6px center / 3px 3px no-repeat,
			linear-gradient(135deg, #000 50%, transparent 50%) right 3px center / 3px 3px no-repeat,
			#fff;
	}

	.bar.edit {
		height: 26px;
	}

	.bar.member-bar {
		height: 28px;
	}

	.bar.draw {
		height: 30px;
		gap: 2px;
	}

	.axis {
		margin-left: 74px;
	}

	.spare {
		width: 30px;
	}

	/* panels */
	.title {
		display: flex;
		align-items: center;
		flex: none;
		height: 15px;
		border: 1px solid #7c7c7c;
		gap: 5px;
		padding-right: 3px;
	}

	.title.active {
		border-color: #0050e0;
		background: #0050e0;
		color: #fff;
	}

	.title h2 {
		flex: 1;
		line-height: 13px;
		white-space: nowrap;
	}

	.title button {
		display: flex;
		width: 13px;
		justify-content: center;
	}

	.title svg {
		width: 10px;
		height: 10px;
		fill: none;
		stroke: currentColor;
	}

	.main {
		display: flex;
		flex: 1;
		min-height: 0;
	}

	.nav {
		display: flex;
		flex-direction: column;
		flex: none;
		width: 96px;
		margin-right: 5px;
	}

	.page {
		flex: none;
		height: 22px;
		padding-left: 1px;
		border: solid #a8a8a8;
		border-width: 0 1px 1px 0;
		background: #f0f0f0;
		text-align: left;
		text-indent: -12px;
		overflow: hidden;
	}

	.page.first {
		margin-top: 2px;
	}

	.nav-gap {
		height: 27px;
	}

	.nav-tree {
		flex: 1;
		margin-right: 1px;
		overflow: hidden;
		border: solid #828790;
		border-width: 1px 1px 2px 0;
		background: #fff;
	}

	.nav-tree ul {
		margin: 1px 0 0 -23px;
		padding: 0;
		list-style: none;
	}

	.nav-tree li {
		display: flex;
		align-items: center;
		height: 16px;
		white-space: nowrap;
	}

	.nav-tree .leaf {
		padding-left: 18px;
	}

	.nav-tree .current {
		padding-right: 4px;
		background: #d9d9d9;
	}

	.nav-tree small {
		font: 10px 'Liberation Mono', monospace;
	}

	.book {
		width: 16px;
		height: 14px;
		margin-left: 5px;
	}

	.new {
		align-self: flex-start;
		margin-left: 1px;
		background: #ffe600;
		font: bold 8px/9px 'DejaVu Sans', sans-serif;
	}

	.side {
		display: flex;
		flex-direction: column;
		flex: none;
		width: 164px;
		margin-right: 3px;
	}

	.side-tools {
		display: flex;
		align-items: center;
		height: 28px;
		padding-left: 1px;
		background: linear-gradient(#fefefe, #f0f0f0);
		font-family: 'Noto Sans CJK SC', sans-serif;
	}

	.search {
		display: flex;
		height: 26px;
		padding: 1px 0 1px 1px;
	}

	.search input {
		flex: 1;
		min-width: 0;
		padding-left: 2px;
		border: 1px solid #7a7a7a;
		background: #fff;
		font-family: 'Noto Sans CJK SC', sans-serif;
	}

	.search button {
		display: flex;
		align-items: center;
		justify-content: center;
		width: 25px;
	}

	.box {
		border: 1px solid #828790;
		background: #fff;
	}

	.members {
		flex: 1;
		padding-top: 2px;
	}

	.branch {
		display: flex;
		align-items: center;
		height: 16px;
		gap: 3px;
	}

	.fold {
		width: 20px;
		height: 16px;
	}

	.member {
		display: flex;
		height: 16px;
		padding-left: 30px;
	}

	.twig {
		width: 10px;
		height: 16px;
	}

	.leafname {
		display: flex;
		align-items: center;
		gap: 7px;
		padding: 0 4px;
	}

	.leafname svg {
		width: 12px;
		height: 12px;
	}

	.leafname.current {
		background: #316ac5;
	}

	.gap {
		flex: none;
		height: 7px;
	}

	.sheets {
		flex: none;
		height: 228px;
		padding-top: 1px;
	}

	.tabs {
		display: flex;
		height: 21px;
	}

	.tab {
		flex: 1;
		min-width: 0;
		padding-left: 4px;
		border: solid #dcdcdc;
		border-width: 1px 1px 1px 0;
		overflow: hidden;
		text-align: left;
		white-space: nowrap;
	}

	.tab.active {
		flex: none;
		width: 88px;
		padding-left: 6px;
		border-width: 1px 1px 0 1px;
		background: #fff;
	}

	.step {
		display: flex;
		align-items: center;
		justify-content: center;
		width: 16px;
		height: 17px;
		margin-top: 1px;
		border: 1px solid #a6a6a6;
	}

	.tri {
		width: 5px;
		height: 3px;
		background: #555;
		clip-path: polygon(0 0, 100% 0, 50% 100%);
	}

	.tri.up {
		clip-path: polygon(50% 0, 100% 100%, 0 100%);
	}

	.tri.left,
	.tri.right {
		width: 4px;
		height: 7px;
		background: #000;
		clip-path: polygon(0 50%, 100% 0, 100% 100%);
	}

	.tri.right {
		clip-path: polygon(0 0, 100% 50%, 0 100%);
	}

	.sheet-body {
		height: 206px;
		margin-right: 1px;
		padding: 3px 2px 3px 4px;
		border: solid #dcdcdc;
		border-width: 0 1px 1px;
		background: #fff;
	}

	.sheet-tools {
		display: flex;
		height: 24px;
		font-family: 'Noto Sans CJK SC', sans-serif;
	}

	.raised {
		width: 58px;
		border: 1px solid #a6a6a6;
		background: #f0f0f0;
		white-space: nowrap;
	}

	.raised.drop {
		display: flex;
		align-items: center;
		justify-content: center;
		width: 13px;
	}

	.raised.more {
		width: 13px;
		margin-left: auto;
		padding-bottom: 8px;
		font-weight: bold;
	}

	.sheet-grid {
		display: flex;
		flex-direction: column;
		height: 174px;
		margin-top: 1px;
		padding: 1px;
		border: 1px solid #a0a0a0;
		overflow: hidden;
	}

	/* grids */
	.grid {
		table-layout: fixed;
		width: 100%;
		border-spacing: 0;
	}

	.grid th,
	.grid td {
		height: 19px;
		padding: 0 0 0 2px;
		border: solid #bfbfbf;
		border-width: 0 1px 1px 0;
		font-weight: normal;
		line-height: 18px;
		overflow: hidden;
		white-space: nowrap;
		text-align: left;
	}

	.grid th {
		padding: 0;
		background: linear-gradient(#fff, #efefef);
		text-align: center;
	}

	.grid th.hot {
		background: linear-gradient(#fbd9a0, #f1bf60);
		color: #5c0048;
	}

	.grid .idx {
		padding: 0;
		background: #f6f6f6;
		text-align: center;
	}

	.grid .current .idx {
		background: #ffd28a;
		color: #5c0048;
	}

	.grid td.sky {
		background: #d8e9f8;
	}

	.grid td.mint {
		background: #ccffd6;
	}

	.sheet-grid .idx {
		width: 21px;
	}

	.sheet-grid th {
		height: 26px;
	}

	.sheet-grid td:last-child {
		padding-left: 20px;
		border-right: 0;
	}

	.sheet-grid .current td:last-child {
		border: 2px solid #7c8c7c;
		padding-left: 18px;
		line-height: 15px;
		background: #078024;
	}

	.scroll {
		display: flex;
		align-items: center;
		flex: none;
		height: 15px;
		margin-top: auto;
		background: #f0f0f0;
		color: #444;
		font: bold 16px/12px 'Liberation Sans', sans-serif;
	}

	.scroll i {
		width: 17px;
		font-style: normal;
		text-align: center;
	}

	.scroll i:last-child {
		margin-left: auto;
	}

	.thumb {
		width: 133px;
		height: 15px;
		background: #cdcdcd;
	}

	.thumb.short {
		width: 17px;
	}

	.layers {
		flex: none;
		height: 221px;
		margin-top: 1px;
		padding-top: 1px;
	}

	.layer {
		display: flex;
		align-items: center;
		height: 14px;
		padding-left: 10px;
	}

	.layer i {
		width: 15px;
		color: #999;
		font: 16px/12px 'Liberation Sans', sans-serif;
	}

	.layer label {
		display: flex;
		align-items: center;
		gap: 3px;
	}

	input[type='checkbox'] {
		appearance: none;
		width: 12px;
		height: 12px;
		border: 1px solid #333;
		background: #fff;
	}

	input[type='checkbox']:indeterminate {
		padding: 2px;
		background: #333 content-box;
	}

	/* work area */
	.work {
		display: flex;
		flex-direction: column;
		flex: 1;
		min-width: 0;
		margin-right: 3px;
	}

	.canvas {
		flex: 1;
		min-height: 0;
		overflow: hidden;
		background: #bebebe;
	}

	.canvas svg {
		display: block;
		font-family: 'Liberation Sans', sans-serif;
		text-anchor: middle;
	}

	.crisp {
		shape-rendering: crispEdges;
	}

	.bright {
		fill: none;
		stroke: #0f0;
	}

	.thick {
		stroke-width: 2;
	}

	.dark {
		fill: none;
		stroke: #008000;
	}

	.red {
		stroke: #f00;
	}

	.yellow {
		stroke: #ff0;
		stroke-width: 2;
	}

	.pink {
		stroke: #f0f;
		stroke-width: 2;
	}

	.lead {
		fill: #e0e0e0;
		font-size: 15px;
	}

	.mini {
		fill: #ccc;
		font-size: 8px;
	}

	.tiny {
		fill: #999;
		font-size: 6px;
	}

	.green {
		fill: #008000;
	}

	.foot {
		fill: #555;
		font-size: 15px;
	}

	.foot.row {
		font-size: 14px;
	}

	.foot.warm {
		fill: #b54040;
	}

	.bar.snap {
		height: 32px;
		padding-bottom: 4px;
	}

	.unit {
		width: 20px;
		color: #777;
		text-align: center;
	}

	.unit.mm {
		width: 26px;
		text-align: left;
		padding-left: 2px;
	}

	.degree {
		padding: 0 4px 0 2px;
		color: #777;
	}

	.spin {
		display: flex;
		width: 58px;
		height: 23px;
		border: 1px solid #7a7a7a;
		color: #888;
	}

	.spin input {
		flex: 1;
		min-width: 0;
		text-align: right;
	}

	.spin.wide {
		width: 69px;
		margin-left: 5px;
	}

	.arrows {
		display: flex;
		flex-direction: column;
		justify-content: space-between;
		width: 20px;
		padding: 4px 5px 4px 10px;
	}

	.turn {
		display: flex;
		align-items: center;
		gap: 8px;
		padding-left: 4px;
		border-left: 1px solid #b8b8b8;
	}

	.turn input {
		border-color: #999;
	}

	.lower {
		display: flex;
		flex: none;
		height: 201px;
	}

	.handle {
		display: flex;
		flex-direction: column;
		flex: none;
		width: 12px;
		padding-top: 1px;
	}

	.handle button {
		height: 12px;
	}

	.handle svg {
		display: block;
		width: 10px;
		height: 10px;
	}

	.handle i {
		flex: 1;
		width: 7px;
		margin: 2px 0 2px 2px;
		background: radial-gradient(circle at 1px 1px, #b0b0b0 1px, transparent 1px) 0 0 / 4px 5px;
	}

	.weight {
		display: flex;
		flex-direction: column;
		flex: 642 0 0;
		min-width: 0;
		margin-right: 4px;
	}

	.weight h3 {
		height: 19px;
		padding-left: 15px;
		line-height: 18px;
		font-family: 'Noto Sans CJK SC', sans-serif;
	}

	.weight .box {
		flex: 1;
		padding: 1px;
	}

	.total {
		width: 86px;
	}

	.total .idx {
		width: 21px;
	}

	.total th {
		height: 37px;
	}

	.rebar {
		display: flex;
		flex-direction: column;
		flex: 646 0 0;
		min-width: 0;
	}

	.rebar-tools {
		height: 27px;
		font-family: 'Noto Sans CJK SC', sans-serif;
	}

	.rebar-tools .overflow {
		align-self: flex-start;
		margin-left: auto;
		padding-right: 4px;
		font-weight: bold;
	}

	.rebar .box {
		display: flex;
		flex-direction: column;
		flex: 1;
		padding: 1px;
	}

	.c1 { width: 33px; }
	.c2 { width: 73px; }
	.c3 { width: 56px; }
	.c4 { width: 36px; }
	.c5 { width: 33px; }
	.c6 { width: 211px; }
	.c7 { width: 166px; }

	.grid td.edge {
		border-right-color: #000;
	}

	.inspector {
		display: flex;
		flex-direction: column;
		flex: none;
		width: 263px;
		margin-right: 1px;
	}

	.inspector .box {
		flex: 1;
		margin-top: 1px;
		padding: 1px 2px 1px 1px;
	}

	.p1 { width: 21px; }
	.p2 { width: 121px; }

	.inspector th {
		height: 24px;
	}

	.grid td.name {
		padding-left: 19px;
	}

	.name.key {
		color: #00f;
	}

	.name.dim {
		color: #808080;
	}

	.grid td.picked {
		background: #0078d7;
		color: #fff;
	}

	.node {
		display: flex;
		height: 18px;
		margin-left: -18px;
	}

	.node svg {
		flex: none;
		width: 28px;
		height: 18px;
	}

	.node svg.root {
		width: 18px;
	}

	.swatch {
		display: block;
		height: 14px;
		margin: 2px 4px 2px 2px;
		border: 1px solid #000;
	}

	.steel {
		width: 10px;
		height: 10px;
		margin: 0 1px 0 2px;
		vertical-align: -1px;
	}

	.status {
		display: flex;
		flex: none;
		gap: 2px;
		height: 21px;
	}

	.status span {
		flex: none;
		padding: 1px 2px;
		border: 1px solid #d4d4d4;
		background: linear-gradient(#fdfdfd, #f0f0f0);
		white-space: nowrap;
	}

	.status .s1 { width: 79px; padding-left: 0; border-left: 0; }
	.status .s2 { width: 78px; padding-left: 1px; }
	.status .s3 { width: 98px; padding-left: 1px; }
	.status .s4 { width: 48px; }
	.status .s5 { flex: 1; padding-left: 1px; }
	.status .s6 { width: 70px; padding-left: 1px; }

	/* overlays */
	.marks {
		position: absolute;
		inset: 0;
		width: 100%;
		height: 100%;
		fill: #fb3a3a;
		pointer-events: none;
	}

	.ime {
		position: absolute;
		bottom: 0;
		left: 1345px;
		display: flex;
		align-items: center;
		height: 27px;
	}

	.ime svg {
		width: 30px;
		height: 27px;
	}

	.ime span {
		width: 24px;
		height: 23px;
		border: 1px solid #b9cbe0;
		background: #fff;
		color: #1464c0;
		font: bold 14px/20px 'Noto Sans CJK SC', sans-serif;
		text-align: center;
	}

	.ball {
		position: absolute;
		top: 535px;
		right: -28px;
		width: 46px;
		height: 46px;
		padding-left: 2px;
		border: 2px solid #c9c9c9;
		border-radius: 50%;
		background: radial-gradient(circle at 50% 30%, #6fdc80, #34b94c);
		box-shadow: inset 0 0 0 1px #1f7a5a, -2px 4px 8px rgba(0, 0, 0, 0.3);
		color: #fff;
		font: bold 10px/42px 'DejaVu Sans', sans-serif;
	}
</style>
